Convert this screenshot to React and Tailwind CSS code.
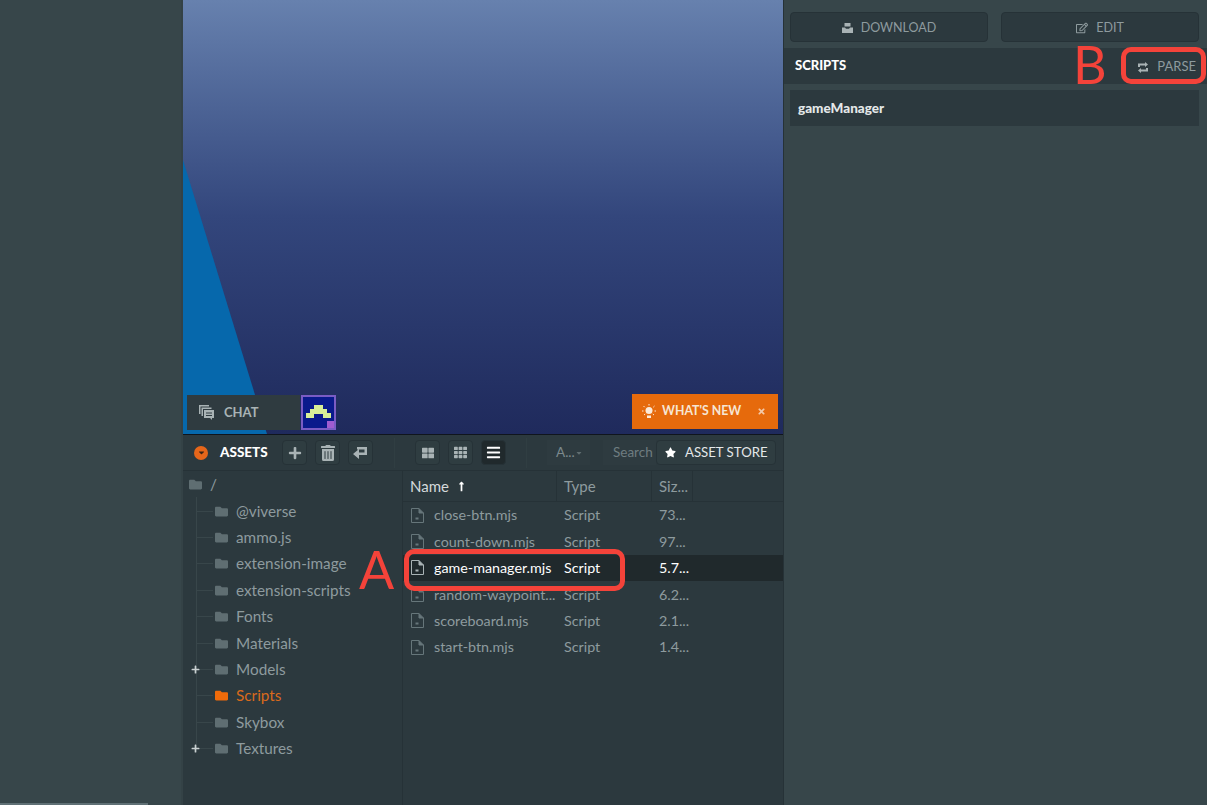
import React from 'react';
import { FaPlus, FaTrashAlt, FaRegEdit, FaStar, FaTimes, FaFolder, FaBars, FaTh, FaThLarge, FaLongArrowAltUp, FaCaretDown } from 'react-icons/fa';

const folders = [
  { name: '@viverse' },
  { name: 'ammo.js' },
  { name: 'extension-image' },
  { name: 'extension-scripts' },
  { name: 'Fonts' },
  { name: 'Materials' },
  { name: 'Models', plus: true },
  { name: 'Scripts', active: true },
  { name: 'Skybox' },
  { name: 'Textures', plus: true },
];

const files = [
  { name: 'close-btn.mjs', size: '73...' },
  { name: 'count-down.mjs', size: '97...' },
  { name: 'game-manager.mjs', size: '5.7...', selected: true },
  { name: 'random-waypoint...', size: '6.2...' },
  { name: 'scoreboard.mjs', size: '2.1...' },
  { name: 'start-btn.mjs', size: '1.4...' },
];

const FileIcon = ({ color }) => (
  <svg width="15" height="17" viewBox="0 0 15 17" fill="none" stroke={color} strokeWidth="1" className="shrink-0">
    <path d="M1.5 1.5h7.5l4.5 4.5v9.500h-12z" />
    <path d="M9 1.5v4.5h4.5" fill={color} />
    <path d="M5.5 12.5h3v-2h-3z" fill={color} stroke="none" />
  </svg>
);

const ChatIcon = () => (
  <svg width="15" height="15" viewBox="0 0 15 15" fill="#a9b3b5" className="shrink-0">
    <path d="M0 0h10v1.5H1.5V9H0z" />
    <path d="M2.5 2.5h10v1.5H4V11H2.5z" />
    <path d="M5 5h10v8h-2v2l-2-2H5zM7 7.5v1h6v-1zM7 10v1h6v-1z" fillRule="evenodd" />
  </svg>
);

const ReturnIcon = () => (
  <svg width="15" height="14" viewBox="0 0 15 14" fill="#a9b3b5">
    <path d="M4 1h10v8H6v4L0 8l6-5v3.500h5.500V3.500H4z" />
  </svg>
);

const DownloadIcon = () => (
  <svg width="11" height="10" viewBox="0 0 11 10" fill="#a9b3b5" className="shrink-0">
    <path d="M2.500 0h6v3.500h-6zM0 4.500h3l1 1.200h3l1-1.200h3V10H0z" />
  </svg>
);

const ParseIcon = () => (
  <svg width="12" height="11" viewBox="0 0 12 11" fill="#a9b3b5" className="shrink-0">
    <path d="M1 1.500h7V0l3 2.500L8 5V3.500H3V5H1z" />
    <path d="M11 9.500H4V11L1 8.500 4 6v1.500h5V6h2z" />
  </svg>
);

const BulbIcon = () => (
  <svg width="14" height="15" viewBox="0 0 14 15" fill="#fbead9" stroke="#fbead9" className="shrink-0">
    <circle cx="7" cy="6.500" r="3.500" stroke="none" />
    <path d="M5 11.500h4v2.500H5z" stroke="none" />
    <path d="M7 0v1.500M1.500 2l1.200 1.200M12.500 2l-1.200 1.200M0 7h1.500M12.500 7H14M2 11l1.200-1M12 11l-1.200-1" fill="none" strokeWidth="1" />
  </svg>
);

const ToolButton = ({ children, active }) => (
  <div className={`w-[25px] h-[25px] flex items-center justify-center border border-[#263237] rounded-sm ${active ? 'bg-[#20292c]' : 'bg-[#2f3d41]'}`}>
    {children}
  </div>
);

export default function App() {
  return (
    <div className="relative w-[1207px] h-[805px] overflow-hidden flex bg-[#37464a] [font-family:Lato,'Liberation_Sans',sans-serif]">
      {/* left empty column */}
      <div className="w-[183px] h-full flex flex-col justify-end bg-[#37464a] border-r-2 border-[#344246]">
        <div className="w-[148px] h-[2px] bg-[#5f7075]"></div>
      </div>

      {/* center */}
      <div className="w-[600px] h-full flex flex-col bg-[#2c393e]">
        <div className="relative h-[435px] shrink-0 flex items-end justify-between pl-1 pr-[5px] pb-[4px] bg-gradient-to-b from-[#6781ae] via-[#33467c] via-50% to-[#1f2a5c] border-b border-[#10151d]">
          <svg className="absolute left-0 bottom-0" width="84" height="274" viewBox="0 0 84 274">
            <path d="M0 0L84 274H0z" fill="#0668ac" />
          </svg>
          <div className="relative flex items-stretch h-[35px] gap-px">
            <div className="w-[113px] bg-[#2f3b40] flex items-center gap-[10px] pl-[12px] text-[13px] font-bold text-[#a9b3b5]">
              <ChatIcon />
              <span>CHAT</span>
            </div>
            <div className="relative w-[35px] bg-[#0a1a8c] border-2 border-[#7a5cc4]">
              <svg className="absolute left-[3px] top-[8px]" width="25" height="13" viewBox="0 0 25 13" fill="#d8ee98">
                <path d="M8 0h9v4h4v4h4v5h-8V9H8v4H0V8h4V4h4z" />
              </svg>
              <div className="absolute right-0 bottom-0 w-[7px] h-[7px] bg-[#a05cd0]"></div>
            </div>
          </div>
          <div className="relative w-[146px] h-[35px] mb-px bg-[#e66a0c] flex items-center pl-[10px] text-[#f6e6d4] text-[12.300px] font-bold">
            <BulbIcon />
            <span className="ml-[6px] whitespace-nowrap">WHAT'S NEW</span>
            <FaTimes className="w-[9px] h-[9px] ml-[16px] text-[#f3c9a8]" />
          </div>
        </div>

        {/* toolbar */}
        <div className="h-[36px] shrink-0 flex items-center border-b border-[#263237] pl-[11px] pr-[7px]">
          <div className="w-[14px] h-[14px] rounded-full bg-[#e6661a] flex items-center justify-center">
            <FaCaretDown className="w-[9px] h-[9px] text-[#3a2415]" />
          </div>
          <span className="ml-[12px] w-[48px] text-[13.500px] font-black text-white">ASSETS</span>
          <div className="ml-[14px] flex items-center gap-[8px]">
            <ToolButton><FaPlus className="w-[14px] h-[14px] text-[#a9b3b5]" /></ToolButton>
            <ToolButton><FaTrashAlt className="w-[14px] h-[16px] text-[#a9b3b5]" /></ToolButton>
            <ToolButton><ReturnIcon /></ToolButton>
          </div>
          <div className="ml-[21px] w-px h-[30px] bg-[#303e42]"></div>
          <div className="ml-[20px] flex items-center gap-[8px]">
            <ToolButton><FaThLarge className="w-[12px] h-[12px] text-[#a9b3b5]" /></ToolButton>
            <ToolButton><FaTh className="w-[13px] h-[13px] text-[#a9b3b5]" /></ToolButton>
            <ToolButton active><FaBars className="w-[15px] h-[15px] text-white" /></ToolButton>
          </div>
          <div className="ml-[20px] w-px h-[30px] bg-[#303e42]"></div>
          <div className="ml-[20px] w-[43px] h-[25px] flex items-center bg-[#2e3b40] pl-[9px] text-[13.500px] text-[#7c8a8d]">
            <span>A...</span>
            <FaCaretDown className="w-[8px] h-[8px] text-[#5f6d70]" />
          </div>
          <div className="ml-[13px] w-[53px] h-[25px] flex items-center bg-[#2e3b40] pl-[10px] text-[13.500px] text-[#6f7d80]">Search</div>
          <div className="h-[25px] w-[120px] flex items-center bg-[#2f3d41] border border-[#263237] rounded-sm pl-[8px] text-[13.200px] text-[#e4e8e9]">
            <FaStar className="w-[11px] h-[11px] text-white" />
            <span className="ml-[9px] whitespace-nowrap">ASSET STORE</span>
          </div>
        </div>

        {/* body */}
        <div className="flex-1 flex min-h-0">
          <div className="w-[220px] shrink-0 border-r border-[#263237] text-[15.300px] text-[#8e9b9e]">
            <div className="h-[26.400px] flex items-center pl-[6px]">
              <FaFolder className="w-[13px] h-[13px] text-[#5f6e72]" />
              <span className="ml-[8px]">/</span>
            </div>
            <div className="ml-[13px] border-l border-[#38464a] h-[251px] pt-[0.500px]">
              {folders.map((f) => (
                <div key={f.name} className="relative h-[26.400px] flex items-center">
                  {f.plus && <FaPlus className="absolute left-[-6px] w-[9px] h-[9px] text-[#c9d0d1]" />}
                  <div className="w-[16px] h-px bg-[#38464a]"></div>
                  <FaFolder className={`ml-[2px] w-[13px] h-[13px] ${f.active ? 'text-[#f06b0a]' : 'text-[#5f6e72]'}`} />
                  <span className={`ml-[8px] ${f.active ? 'text-[#d96a1c]' : ''}`}>{f.name}</span>
                </div>
              ))}
            </div>
          </div>

          <div className="flex-1 min-w-0">
            <div className="h-[31px] flex items-center border-b border-[#263237] text-[15px] text-[#8e9b9e]">
              <div className="w-[154px] h-full flex items-center pl-[7px] border-r border-[#263237] text-[#d5dadb]">
                <span>Name</span>
                <FaLongArrowAltUp className="ml-[7px] w-[11px] h-[11px] text-white" />
              </div>
              <div className="w-[95px] h-full flex items-center pl-[7px] border-r border-[#263237]">Type</div>
              <div className="w-[41px] h-full flex items-center pl-[7px] border-r border-[#263237]">Siz...</div>
            </div>
            {files.map((f) => (
              <div key={f.name} className={`h-[26.400px] flex items-center text-[14.300px] ${f.selected ? 'bg-[#20292c] text-white' : 'text-[#8e9b9e]'}`}>
                <div className="w-[154px] flex items-center pl-[7px] whitespace-nowrap">
                  <FileIcon color={f.selected ? '#a9b3b5' : '#66767a'} />
                  <span className="ml-[9px]">{f.name}</span>
                </div>
                <div className="w-[95px] pl-[7px]">Script</div>
                <div className="pl-[7px]">{f.size}</div>
              </div>
            ))}
          </div>
        </div>
      </div>

      {/* right panel */}
      <div className="flex-1 flex flex-col bg-[#37464a] border-l border-[#263237]">
        <div className="flex gap-[13px] px-[6px] pt-[12px]">
          <div className="w-[198px] h-[30px] pt-[2px] flex items-center justify-center gap-[8px] bg-[#2c393e] border border-[#263237] rounded-sm text-[12.500px] text-[#8e9b9e]">
            <DownloadIcon />
            <span>DOWNLOAD</span>
          </div>
          <div className="w-[198px] h-[30px] pt-[2px] flex items-center justify-center gap-[8px] bg-[#2c393e] border border-[#263237] rounded-sm text-[12.500px] text-[#8e9b9e]">
            <FaRegEdit className="w-[12px] h-[12px]" />
            <span>EDIT</span>
          </div>
        </div>
        <div className="mt-[6px] h-[36px] flex items-center justify-between bg-[#2c393e] pl-[11px] pr-[11px]">
          <span className="text-[13px] font-black text-white">SCRIPTS</span>
          <div className="pt-[2px] flex items-center gap-[8px] text-[13px] text-[#8e9b9e]">
            <ParseIcon />
            <span>PARSE</span>
          </div>
        </div>
        <div className="ml-[6px] mr-[8px] mt-[6px] h-[36px] flex items-center bg-[#2c393e] pl-[8px] text-[13.500px] font-black text-[#e4e8e9]">
          gameManager
        </div>
      </div>

      {/* red annotations */}
      <div className="absolute left-[404px] top-[549px] w-[221px] h-[42px] border-[5px] border-[#f4433a] rounded-[10px]"></div>
      <div className="absolute left-[1121px] top-[47px] w-[85px] h-[37px] border-[5px] border-[#f4433a] rounded-[10px]"></div>
      <span className="absolute left-[359px] top-[539px] text-[52px] leading-[60px] text-[#f4433a]">A</span>
      <span className="absolute left-[1073px] top-[34px] text-[52px] leading-[60px] text-[#f4433a]">B</span>
    </div>
  );
}
